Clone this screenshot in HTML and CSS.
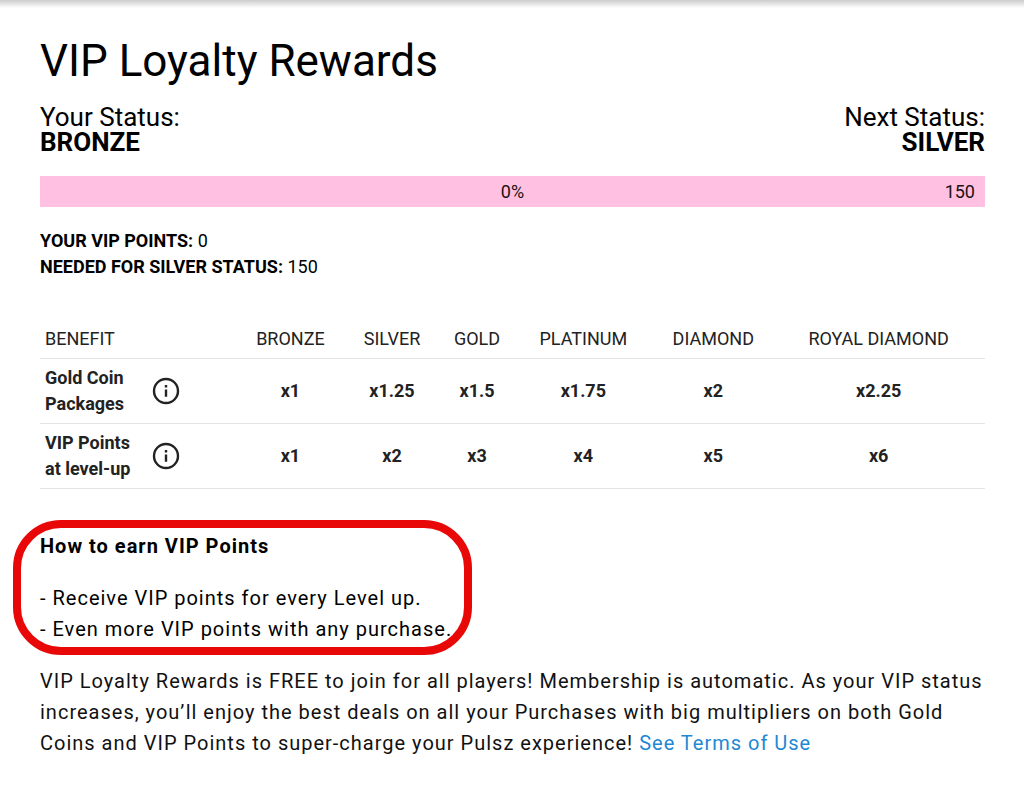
FILE: index.html
```html
<!DOCTYPE html>
<html lang="en">
<head>
  <meta charset="utf-8">
  <meta name="viewport" content="width=device-width, initial-scale=1.0">
  <title>VIP Loyalty Rewards</title>
  <link rel="stylesheet" href="styles.css">
</head>
<body>
  <main class="page">
    <h1>VIP Loyalty Rewards</h1>

    <div class="status">
      <div>Your Status:<br><strong>BRONZE</strong></div>
      <div class="next">Next Status:<br><strong>SILVER</strong></div>
    </div>

    <div class="progress">
      <span class="percent">0%</span>
      <span class="goal">150</span>
    </div>

    <div class="points">
      <div><strong>YOUR VIP POINTS:</strong> 0</div>
      <div><strong>NEEDED FOR SILVER STATUS:</strong> 150</div>
    </div>

    <table class="benefits">
      <colgroup>
        <col class="c-benefit">
        <col class="c-bronze">
        <col class="c-silver">
        <col class="c-gold">
        <col class="c-platinum">
        <col class="c-diamond">
        <col class="c-royal">
      </colgroup>
      <thead>
        <tr>
          <th class="label">BENEFIT</th>
          <th>BRONZE</th>
          <th>SILVER</th>
          <th>GOLD</th>
          <th>PLATINUM</th>
          <th>DIAMOND</th>
          <th>ROYAL DIAMOND</th>
        </tr>
      </thead>
      <tbody>
        <tr>
          <td class="label">
            <div class="benefit">
              <span>Gold Coin<br>Packages</span>
              <button type="button" class="info" aria-label="About Gold Coin Packages">
                <svg viewBox="0 0 28 28"><circle cx="14" cy="14" r="12"/><path d="M14 12.6v7.2M14 8v2.6"/></svg>
              </button>
            </div>
          </td>
          <td>x1</td>
          <td>x1.25</td>
          <td>x1.5</td>
          <td>x1.75</td>
          <td>x2</td>
          <td>x2.25</td>
        </tr>
        <tr>
          <td class="label">
            <div class="benefit">
              <span>VIP Points<br>at level-up</span>
              <button type="button" class="info" aria-label="About VIP Points at level-up">
                <svg viewBox="0 0 28 28"><circle cx="14" cy="14" r="12"/><path d="M14 12.6v7.2M14 8v2.6"/></svg>
              </button>
            </div>
          </td>
          <td>x1</td>
          <td>x2</td>
          <td>x3</td>
          <td>x4</td>
          <td>x5</td>
          <td>x6</td>
        </tr>
      </tbody>
    </table>

    <section class="earn">
      <h2>How to earn VIP Points</h2>
      <p>- Receive VIP points for every Level up.<br>- Even more VIP points with any purchase.</p>
    </section>

    <p class="about">VIP Loyalty Rewards is FREE to join for all players! Membership is automatic. As your VIP status increases, you’ll enjoy the best deals on all your Purchases with big multipliers on both Gold Coins and VIP Points to super-charge your Pulsz experience! <a href="#terms">See Terms of Use</a></p>
  </main>
</body>
</html>
```
FILE: styles.css
```css
*, *::before {
  box-sizing: border-box;
}
body {
  margin: 0;
  background: #fff;
  color: #000;
  font-family: Roboto, "Liberation Sans", sans-serif;
  font-size: 18px;
  line-height: 26px;
}
.page {
  padding: 34px 39px 34px 40px;
  background: linear-gradient(#ccc, #fff 8px);
}
h1 {
  margin: 0;
  font-size: 44px;
  line-height: 54px;
  font-weight: 400;
}
.status {
  display: flex;
  justify-content: space-between;
  margin-top: 17px;
  font-size: 26px;
  line-height: 25px;
}
.next {
  text-align: right;
}
.progress {
  display: grid;
  grid-template-columns: 1fr auto 1fr;
  align-items: center;
  height: 31px;
  margin-top: 21px;
  padding: 0 10px;
  background: #ffc0e2;
  color: #211;
}
.percent {
  grid-column: 2;
}
.goal {
  text-align: right;
}
.points {
  margin-top: 21px;
}
.benefits {
  width: 100%;
  margin-top: 40px;
  table-layout: fixed;
  border-collapse: collapse;
  color: #222;
}
.c-benefit { width: 21%; }
.c-bronze { width: 11%; }
.c-silver { width: 10.5%; }
.c-gold { width: 7.5%; }
.c-platinum { width: 15%; }
.c-diamond { width: 12.5%; }
.c-royal { width: 22.5%; }
.benefits th,
.benefits td {
  padding: 0;
  border-bottom: 1px solid #e4e4e4;
  text-align: center;
  white-space: nowrap;
}
.benefits th {
  height: 38px;
  font-weight: 400;
}
.benefits td {
  height: 65px;
  font-weight: 700;
}
.benefits .label {
  padding-left: 5px;
  text-align: left;
}
.benefit {
  display: flex;
  align-items: center;
}
.benefit span {
  width: 107px;
}
.info {
  width: 28px;
  height: 28px;
  padding: 0;
  border: 0;
  background: none;
}
.info svg {
  display: block;
  fill: none;
  stroke: #222;
  stroke-width: 2.4;
}
.earn,
.about {
  font-size: 20px;
  line-height: 31px;
  letter-spacing: 1px;
}
.earn {
  position: relative;
  margin-top: 42px;
}
/* red ring around the section */
.earn::before {
  content: "";
  position: absolute;
  z-index: -1;
  top: -11px;
  left: -27px;
  width: 459px;
  height: 135px;
  border: 8px solid #e80808;
  border-radius: 48px;
}
.page {
  position: relative;
  z-index: 0;
}
h2 {
  margin: 0 0 21px;
  font-size: 20px;
}
p {
  margin: 0;
}
.about {
  margin-top: 21px;
  color: #111;
}
a {
  color: #1e88d2;
  text-decoration: none;
}
```
